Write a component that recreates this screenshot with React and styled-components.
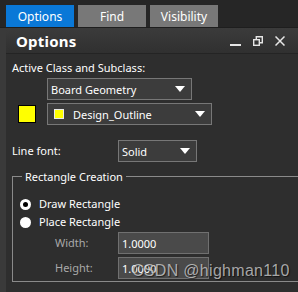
import React from 'react';
import styled, {createGlobalStyle} from 'styled-components';

const GlobalStyle = createGlobalStyle`
  html, body {
    margin: 0;
    padding: 0;
    background: #2b2b2b;
  }
  body {
    font-family: "Noto Sans", "Open Sans", sans-serif;
    color: #ffffff;
  }
`;

const Screen = styled.div`
  position: relative;
  width: 298px;
  height: 292px;
  overflow: hidden;
  display: flex;
  flex-direction: column;
  background: #3a3a3a;
`;

const TabBar = styled.div`
  height: 28px;
  box-sizing: border-box;
  padding: 5px 0 0 6px;
  display: flex;
  gap: 4px;
  background: #262626;
  border-bottom: 1px solid #1e1e1e;
`;

const Tab = styled.div`
  width: 68px;
  height: 22px;
  display: flex;
  align-items: center;
  justify-content: center;
  font-size: 12px;
  color: #ffffff;
  background: ${p => (p.$active ? '#0a78d7' : '#787878')};
`;

const Panel = styled.div`
  flex: 1;
  margin-left: 6px;
  display: flex;
  flex-direction: column;
  background: #2e2e2e;
`;

const Header = styled.div`
  height: 25px;
  display: flex;
  align-items: center;
  padding: 0 10px;
  background: linear-gradient(#3b3b3b, #303030);
  border-bottom: 1px solid #242424;
`;

const Title = styled.div`
  flex: 1;
  font-size: 15px;
  font-weight: 700;
  letter-spacing: 0.2px;
`;

const HeaderIcons = styled.div`
  display: flex;
  align-items: center;
  gap: 12px;
  margin-right: 3px;
`;

const Body = styled.div`
  padding: 7px 0 0 6px;
  display: flex;
  flex-direction: column;
`;

const Label = styled.div`
  font-size: 11px;
  line-height: 14px;
  color: ${p => (p.$dim ? '#a9a9a9' : '#ffffff')};
  width: ${p => p.$w || 'auto'};
`;

const Row = styled.div`
  display: flex;
  align-items: center;
  margin-top: ${p => p.$mt || 0}px;
  padding-left: ${p => p.$pl || 0}px;
`;

const Swatch = styled.div`
  width: 16px;
  height: 16px;
  background: #ffff00;
  border: 1px solid #000;
  margin-left: 6px;
  margin-right: 11px;
`;

const Select = styled.div`
  box-sizing: border-box;
  width: ${p => p.$w}px;
  height: 22px;
  display: flex;
  align-items: center;
  padding: 0 6px 0 3px;
  background: #3c3c3c;
  border: 1px solid #777777;
  font-size: 11px;
  color: #ffffff;
`;

const SelectText = styled.span`
  flex: 1;
`;

const MiniSwatch = styled.span`
  width: 8px;
  height: 8px;
  background: #ffff00;
  border: 1px solid #e8e8e8;
  margin: 0 9px 0 3px;
`;

const Arrow = styled.span`
  width: 0;
  height: 0;
  border-left: 5px solid transparent;
  border-right: 5px solid transparent;
  border-top: 6px solid #ffffff;
`;

const Group = styled.fieldset`
  margin: 7px -20px 0 0;
  padding: 4px 0 6px 7px;
  border: 1px solid #8a8a8a;
  border-right: none;
  min-width: 0;
  height: 101px;
`;

const Legend = styled.legend`
  padding: 0 3px;
  margin-left: 2px;
  font-size: 11px;
  color: #ffffff;
`;

const RadioDot = styled.span`
  box-sizing: border-box;
  width: 11px;
  height: 11px;
  border-radius: 50%;
  background: #ffffff;
  display: flex;
  align-items: center;
  justify-content: center;
  margin-right: 8px;
  &::after {
    content: '';
    display: ${p => (p.$on ? 'block' : 'none')};
    width: 5px;
    height: 5px;
    border-radius: 50%;
    background: #000;
  }
`;

const Input = styled.div`
  box-sizing: border-box;
  width: 91px;
  height: 22px;
  display: flex;
  align-items: center;
  padding-left: 3px;
  background: #4a4a4a;
  border: 1px solid #707070;
  font-size: 11px;
  color: #ffffff;
`;

const Watermark = styled.div`
  position: absolute;
  left: 132px;
  top: 262px;
  font-family: "Liberation Sans", Arial, sans-serif;
  font-size: 16px;
  letter-spacing: 0.3px;
  color: rgba(220, 220, 220, 0.72);
  text-shadow: 1px 1px 1px rgba(0, 0, 0, 0.6);
  white-space: nowrap;
  pointer-events: none;
`;

const MinIcon = () => (
  <svg width="11" height="12" viewBox="0 0 11 12">
    <rect x="0" y="9" width="11" height="2" fill="#e6e6e6" />
  </svg>
);

const RestoreIcon = () => (
  <svg width="10" height="10" viewBox="0 0 10 10" fill="none" stroke="#e6e6e6" strokeWidth="1.4">
    <rect x="0.7" y="3.7" width="5.6" height="5.6" />
    <path d="M3.3 3.7V0.7h6v6h-3" />
  </svg>
);

const CloseIcon = () => (
  <svg width="10" height="10" viewBox="0 0 10 10" stroke="#e6e6e6" strokeWidth="1.5">
    <path d="M0.5 0.5l9 9M9.5 0.5l-9 9" />
  </svg>
);

export default function App() {
  return (
    <>
      <GlobalStyle />
      <Screen>
        <TabBar>
          <Tab $active>Options</Tab>
          <Tab>Find</Tab>
          <Tab>Visibility</Tab>
        </TabBar>
        <Panel>
          <Header>
            <Title>Options</Title>
            <HeaderIcons>
              <MinIcon />
              <RestoreIcon />
              <CloseIcon />
            </HeaderIcons>
          </Header>
          <Body>
            <Label>Active Class and Subclass:</Label>
            <Row $mt={3} $pl={35}>
              <Select $w={145}>
                <SelectText>Board Geometry</SelectText>
                <Arrow />
              </Select>
            </Row>
            <Row $mt={3}>
              <Swatch />
              <Select $w={165}>
                <MiniSwatch />
                <SelectText>Design_Outline</SelectText>
                <Arrow />
              </Select>
            </Row>
            <Row $mt={15}>
              <Label $w="106px">Line font:</Label>
              <Select $w={79}>
                <SelectText>Solid</SelectText>
                <Arrow />
              </Select>
            </Row>
            <Group>
              <Legend>Rectangle Creation</Legend>
              <Row $mt={9}>
                <RadioDot $on />
                <Label>Draw Rectangle</Label>
              </Row>
              <Row $mt={4}>
                <RadioDot />
                <Label>Place Rectangle</Label>
              </Row>
              <Row $mt={3} $pl={35}>
                <Label $dim $w="63px">Width:</Label>
                <Input>1.0000</Input>
              </Row>
              <Row $mt={3} $pl={35}>
                <Label $dim $w="63px">Height:</Label>
                <Input>1.0000</Input>
              </Row>
            </Group>
          </Body>
        </Panel>
        <Watermark>CSDN @highman110</Watermark>
      </Screen>
    </>
  );
}
